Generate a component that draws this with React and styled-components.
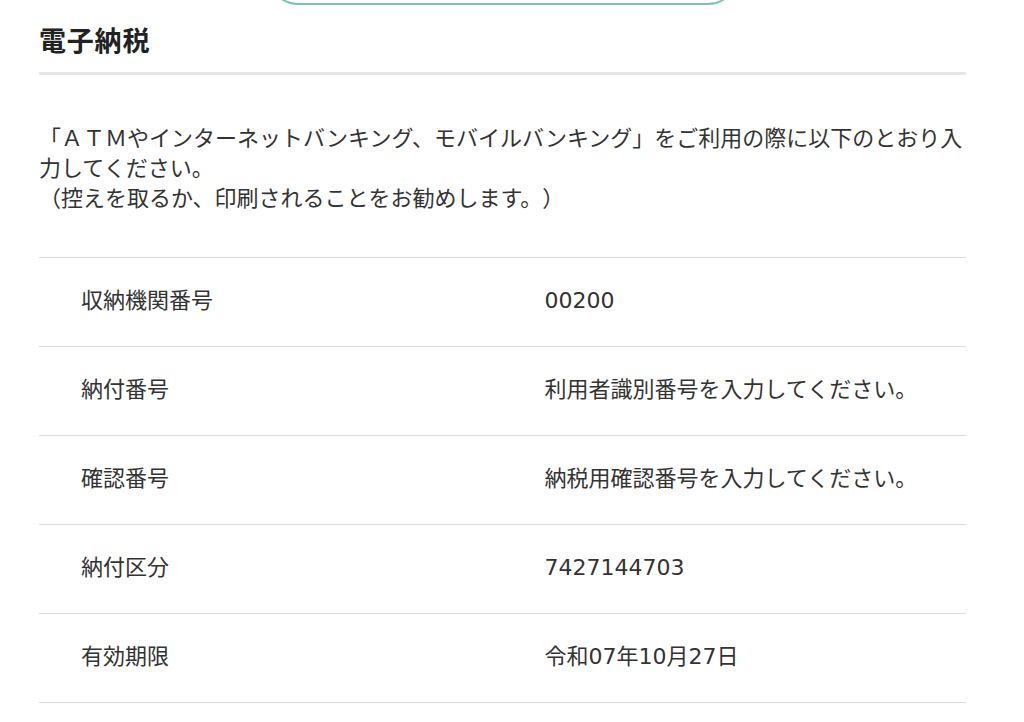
import React from "react";
import styled, { createGlobalStyle } from "styled-components";

const GlobalStyle = createGlobalStyle`
  html, body {
    margin: 0;
    padding: 0;
    background: #ffffff;
  }
  body {
    font-family: "Noto Sans CJK JP", sans-serif;
    color: #333333;
    overflow: hidden;
    text-spacing-trim: space-all;
  }
`;

const Page = styled.div`
  width: 927px;
  padding-left: 39px;
`;

const TopButton = styled.div`
  width: 470px;
  height: 60px;
  margin: -55px auto 0;
  box-sizing: border-box;
  border: 2px solid #80c3ab;
  border-radius: 30px;
  background: #ffffff;
`;

const Heading = styled.h2`
  margin: 15px 0 0;
  padding: 0 0 13px;
  font-family: "Noto Sans CJK JP", sans-serif;
  font-size: 27px;
  font-weight: 700;
  line-height: 39px;
  letter-spacing: 0.8px;
  color: #222222;
  border-bottom: 3px solid #e3e8e6;
`;

const Lead = styled.p`
  margin: 46px 0 46px;
  font-family: "Noto Sans CJK JP", sans-serif;
  font-size: 22px;
  line-height: 30px;
  color: #333333;
  text-spacing-trim: space-all;
`;

const Table = styled.div`
  border-top: 1px solid #dcdcdc;
`;

const Row = styled.div`
  display: grid;
  grid-template-columns: 1fr 1fr;
  align-items: center;
  height: 88px;
  border-bottom: 1px solid #dcdcdc;
`;

const Cell = styled.div`
  padding-left: 42px;
  font-family: "DejaVu Sans", "Noto Sans CJK JP", sans-serif;
  font-size: 22px;
  line-height: 30px;
  color: #333333;
  margin-top: -3px;
`;

const rows = [
  ["収納機関番号", "00200"],
  ["納付番号", "利用者識別番号を入力してください。"],
  ["確認番号", "納税用確認番号を入力してください。"],
  ["納付区分", "7427144703"],
  ["有効期限", "令和07年10月27日"],
];

export default function App() {
  return (
    <>
      <GlobalStyle />
      <Page>
        <TopButton />
        <Heading>電子納税</Heading>
        <Lead>
          「ＡＴＭやインターネットバンキング、モバイルバンキング」をご利用の際に以下のとおり入力してください。
          <br />
          （控えを取るか、印刷されることをお勧めします。）
        </Lead>
        <Table>
          {rows.map(([label, value]) => (
            <Row key={label}>
              <Cell>{label}</Cell>
              <Cell>{value}</Cell>
            </Row>
          ))}
        </Table>
      </Page>
    </>
  );
}
